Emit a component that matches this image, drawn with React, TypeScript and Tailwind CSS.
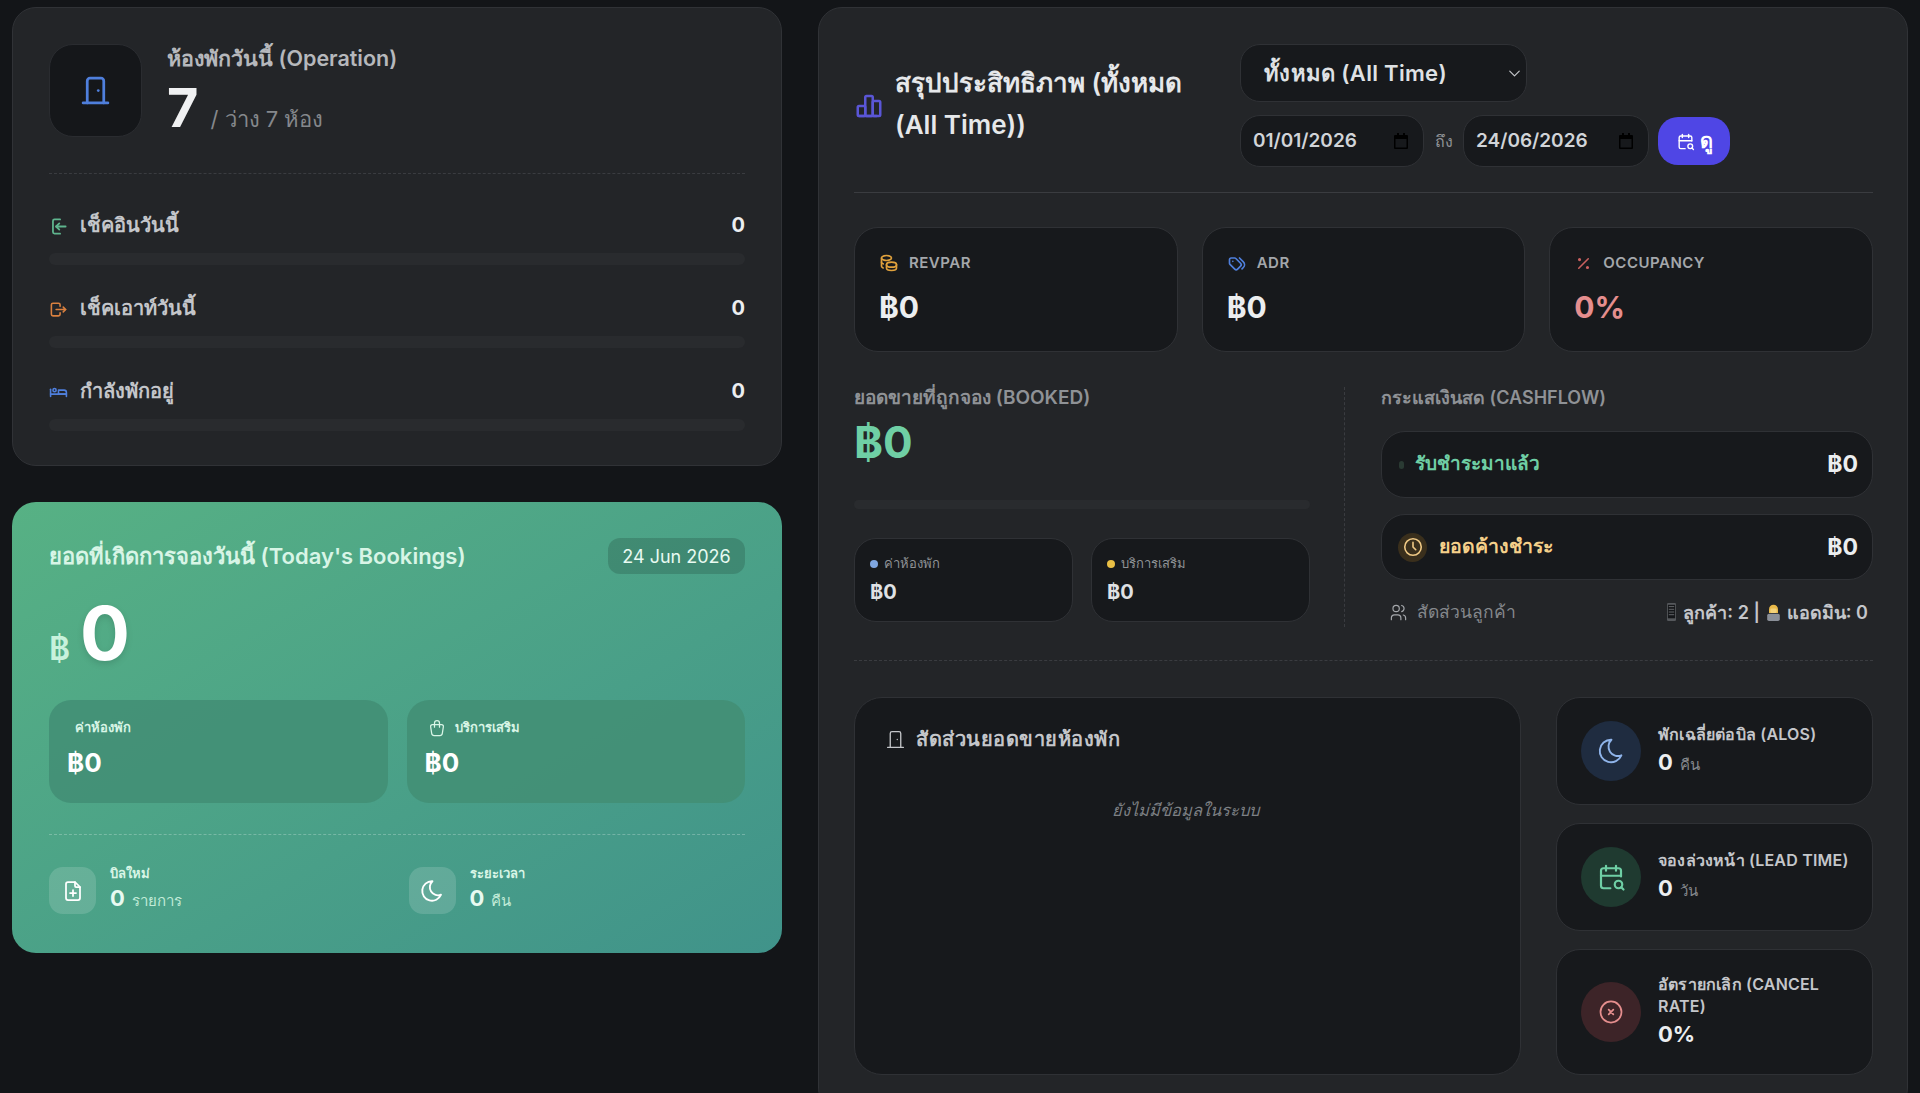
import React from 'react';
import {
  TbBed,
  TbCalendarSearch,
  TbChartBar,
  TbChevronDown,
  TbCircleX,
  TbClock,
  TbCoins,
  TbDoor,
  TbFilePlus,
  TbLogout,
  TbMoon,
  TbPercentage,
  TbShoppingBag,
  TbTags,
  TbUsers,
} from 'react-icons/tb';

const CheckInIcon = () => (
  <svg viewBox="0 0 24 24" fill="none" stroke="currentColor" strokeWidth="2.25" strokeLinecap="round" strokeLinejoin="round" className="w-[19px] h-[19px]">
    <path d="M14 21H7a2 2 0 0 1-2-2V5a2 2 0 0 1 2-2h7" />
    <path d="M13 8l-4 4 4 4" />
    <path d="M9 12h12" />
  </svg>
);

const CalendarGlyph = () => (
  <svg viewBox="0 0 16 16" className="w-[16px] h-[16px] text-black" fill="currentColor">
    <path d="M4 0h2v2h4V0h2v2h2a1 1 0 0 1 1 1v12a1 1 0 0 1-1 1H2a1 1 0 0 1-1-1V3a1 1 0 0 1 1-1h2V0zM2.5 6v8.5h11V6h-11z" />
  </svg>
);

const PhoneEmoji = () => (
  <svg viewBox="0 0 12 20" className="w-[11px] h-[18px]">
    <rect x="1" y="0" width="10" height="20" rx="1.5" fill="#55585c" />
    <rect x="2" y="2" width="8" height="15" fill="#15171a" />
    <path d="M3 4h6M3 7h6M3 10h6M3 13h6" stroke="#6a6d70" strokeWidth="1" />
  </svg>
);

const AdminEmoji = () => (
  <svg viewBox="0 0 16 20" className="w-[15px] h-[18px]">
    <rect x="1" y="12" width="14" height="8" rx="2" fill="#8a8f98" />
    <path d="M3 7a5 5 0 0 1 10 0v4H3z" fill="#e9b949" />
    <rect x="4.5" y="6" width="7" height="5" rx="1.5" fill="#f3d27a" />
  </svg>
);

const OpRow = ({ icon, label }: { icon: React.ReactNode; label: string }) => (
  <div className="mb-7 last:mb-0">
    <div className="flex items-center h-[30px]">
      <span className="w-[31px] flex items-center pt-[3px]">{icon}</span>
      <span className="text-[20px] font-semibold text-[#c4c6ca]">{label}</span>
      <span className="ml-auto text-[20px] font-bold text-[#eceef0]">0</span>
    </div>
    <div className="mt-[13px] h-[12px] rounded-full bg-[#292b2e]"></div>
  </div>
);

const TodayTile = ({ icon, label }: { icon?: React.ReactNode; label: string }) => (
  <div className="h-[103px] rounded-[22px] bg-[#428f75]/90 px-[18px] pt-[17px]">
    <div className="flex items-center h-[22px]">
      <span className={icon ? 'w-[30px] flex items-center pl-[2px]' : 'w-[8px]'}>{icon}</span>
      <span className="text-[13px] font-semibold text-[#d8f5e6]">{label}</span>
    </div>
    <div className="mt-[9px] text-[26px] leading-[30px] font-bold text-white">฿0</div>
  </div>
);

const TodayStat = ({ icon, label, unit }: { icon: React.ReactNode; label: string; unit: string }) => (
  <div className="flex items-center gap-[14px]">
    <div className="w-[47px] h-[47px] rounded-[14px] bg-white/15 flex items-center justify-center text-white">{icon}</div>
    <div>
      <div className="text-[13px] leading-[16px] font-semibold text-[#d8f5e6] -mt-[2px]">{label}</div>
      <div className="flex items-baseline gap-[7px] mt-[4px] leading-[26px]">
        <span className="text-[22px] font-bold text-[#e8faf1]">0</span>
        <span className="text-[15px] font-light text-[#c2ebd8]">{unit}</span>
      </div>
    </div>
  </div>
);

const Kpi = ({ icon, label, value, valueClass }: { icon: React.ReactNode; label: string; value: string; valueClass: string }) => (
  <div className="h-[125px] rounded-[24px] bg-[#17191c] border border-[#2f3135] px-[24px] pt-[24px]">
    <div className="flex items-center h-[22px] gap-[10px]">
      {icon}
      <span className="text-[15px] font-semibold tracking-[0.5px] text-[#a4a7ab]">{label}</span>
    </div>
    <div className={`mt-[13px] text-[30px] leading-[40px] font-bold ${valueClass}`}>{value}</div>
  </div>
);

const SplitTile = ({ dot, label }: { dot: string; label: string }) => (
  <div className="h-[84px] rounded-[22px] bg-[#17191c] border border-[#2f3135] px-[15px] pt-[15px]">
    <div className="flex items-center gap-[6px] h-[20px]">
      <span className={`w-[8px] h-[8px] rounded-full ${dot}`}></span>
      <span className="text-[13px] font-medium text-[#8f9296]">{label}</span>
    </div>
    <div className="mt-[5px] text-[20px] leading-[26px] font-bold text-[#dfe1e4]">฿0</div>
  </div>
);

const MetricCard = ({ icon, tone, label, value, unit, h }: { icon: React.ReactNode; tone: string; label: string; value: string; unit?: string; h: string }) => (
  <div className={`${h} rounded-[24px] bg-[#17191c] border border-[#2f3135] pl-[24px] pr-[10px] flex items-center gap-[17px]`}>
    <div className={`w-[60px] h-[60px] rounded-full flex items-center justify-center shrink-0 ${tone}`}>{icon}</div>
    <div className="pb-[3px]">
      <div className="text-[16px] leading-[22px] tracking-[0.2px] font-semibold text-[#c4c6ca]">{label}</div>
      <div className="flex items-baseline gap-[7px] mt-[3px]">
        <span className="text-[22px] leading-[28px] font-bold text-[#eceef0]">{value}</span>
        {unit && <span className="text-[15px] text-[#85888c]">{unit}</span>}
      </div>
    </div>
  </div>
);

const DateField = ({ value, w }: { value: string; w: string }) => (
  <div className={`${w} h-[52px] rounded-[20px] bg-[#17191c] border border-[#2f3135] pl-[12px] pr-[14px] flex items-center justify-between`}>
    <span className="text-[19px] font-semibold text-[#d1d4d8]">{value}</span>
    <CalendarGlyph />
  </div>
);

export default function App() {
  return (
    <div className="h-[1093px] overflow-hidden bg-[#131518] px-3 pt-[7px] flex gap-9 items-start font-['Inter','Noto_Sans',sans-serif]">
      {/* Left column */}
      <div className="w-[770px] shrink-0">
        <div className="rounded-[24px] bg-[#232528] border border-[#303236] px-9 pt-9 pb-[34px]">
          <div className="flex gap-[25px] pb-[36px] border-b border-dashed border-[#3a3c40]">
            <div className="w-[93px] h-[93px] rounded-[24px] bg-[#15171a] border border-[#2a2c30] flex items-center justify-center">
              <TbDoor className="w-[33px] h-[33px] text-[#4f7fdc]" strokeWidth={2} />
            </div>
            <div className="h-[93px]">
              <div className="text-[21.5px] leading-[26px] font-semibold text-[#b6b8bc] pt-[1px]">ห้องพักวันนี้ (Operation)</div>
              <div className="flex items-baseline gap-[12px] mt-[6px]">
                <span className="text-[54px] leading-[62px] font-bold text-[#f0f1f2]">7</span>
                <span className="text-[22px] text-[#85888c]">/ ว่าง 7 ห้อง</span>
              </div>
            </div>
          </div>
          <div className="mt-[36px]">
            <OpRow icon={<span className="text-[#5fb58e]"><CheckInIcon /></span>} label="เช็คอินวันนี้" />
            <OpRow icon={<TbLogout className="w-[19px] h-[19px] text-[#d9803f]" />} label="เช็คเอาท์วันนี้" />
            <OpRow icon={<TbBed className="w-[19px] h-[19px] text-[#4f7fdc]" />} label="กำลังพักอยู่" />
          </div>
        </div>

        <div className="mt-[36px] rounded-[24px] bg-gradient-to-br from-[#57b184] to-[#40938a] px-[37px] pt-9 pb-[39px]">
          <div className="flex items-center justify-between">
            <span className="text-[22px] font-semibold text-[#d8f5e6]">ยอดที่เกิดการจองวันนี้ (Today's Bookings)</span>
            <span className="h-[36px] w-[137px] rounded-[12px] bg-black/15 flex items-center justify-center text-[18px] text-[#e8faf1]">24 Jun 2026</span>
          </div>
          <div className="h-[126px] flex items-baseline gap-[10px] pt-[17px]">
            <span className="text-[32px] leading-[84px] font-semibold text-[#c8f2dc]">฿</span>
            <span className="text-[74px] leading-[84px] font-bold text-white drop-shadow-md">0</span>
          </div>
          <div className="grid grid-cols-2 gap-[19px]">
            <TodayTile label="ค่าห้องพัก" />
            <TodayTile icon={<TbShoppingBag className="w-[20px] h-[20px] text-[#d8f5e6]" strokeWidth={1.5} />} label="บริการเสริม" />
          </div>
          <div className="mt-[31px] pt-[32px] border-t border-dashed border-white/25 grid grid-cols-2 gap-[23px]">
            <TodayStat icon={<TbFilePlus className="w-[24px] h-[24px]" strokeWidth={1.75} />} label="บิลใหม่" unit="รายการ" />
            <TodayStat icon={<TbMoon className="w-[26px] h-[26px]" strokeWidth={1.75} />} label="ระยะเวลา" unit="คืน" />
          </div>
        </div>
      </div>

      {/* Right column */}
      <div className="flex-1 rounded-[24px] bg-[#232528] border border-[#303236] pl-[35px] pr-[34px] pt-9 pb-9">
        <div className="flex items-center pb-[25px] border-b border-[#3a3c40]">
          <TbChartBar className="w-[30px] h-[30px] text-[#5a56d6] shrink-0" />
          <div className="w-[316px] ml-[11px] mr-[29px] pb-[4px] text-[26px] leading-[42px] font-semibold text-[#e6e8ea]">สรุปประสิทธิภาพ (ทั้งหมด (All Time))</div>
          <div>
            <div className="w-[287px] h-[58px] rounded-[20px] bg-[#17191c] border border-[#2f3135] pl-[23px] pr-[2px] flex items-center justify-between">
              <span className="text-[22px] tracking-[0.3px] font-semibold text-[#dfe1e4]">ทั้งหมด (All Time)</span>
              <TbChevronDown className="w-[19px] h-[19px] text-[#c4c6ca]" strokeWidth={1.5} />
            </div>
            <div className="flex items-center mt-[13px]">
              <DateField value="01/01/2026" w="w-[184px]" />
              <span className="w-[39px] text-center text-[16px] font-medium text-[#8f9296]">ถึง</span>
              <DateField value="24/06/2026" w="w-[186px]" />
              <button className="ml-[9px] w-[72px] h-[48px] rounded-[20px] bg-[#4f46e5] flex items-center justify-center gap-[5px] text-white text-[20px] font-semibold">
                <TbCalendarSearch className="w-[19px] h-[19px]" strokeWidth={1.75} />
                ดู
              </button>
            </div>
          </div>
        </div>

        <div className="mt-[34px] grid grid-cols-3 gap-[24px]">
          <Kpi icon={<TbCoins className="w-[20px] h-[20px] text-[#e0a13c]" />} label="REVPAR" value="฿0" valueClass="text-[#eceef0]" />
          <Kpi icon={<TbTags className="w-[20px] h-[20px] text-[#4f7fdc]" />} label="ADR" value="฿0" valueClass="text-[#eceef0]" />
          <Kpi icon={<TbPercentage className="w-[19px] h-[19px] text-[#c9605f]" />} label="OCCUPANCY" value="0%" valueClass="text-[#e58e8e]" />
        </div>

        <div className="mt-[35px] flex">
          <div className="w-[456px] pb-[5px]">
            <div className="text-[19px] leading-[22px] font-semibold text-[#8f9296]">ยอดขายที่ถูกจอง (BOOKED)</div>
            <div className="mt-[8px] text-[44px] leading-[50px] font-bold text-[#6fcfa5]">฿0</div>
            <div className="mt-[33px] h-[9px] rounded-full bg-[#292b2e]"></div>
            <div className="mt-[29px] grid grid-cols-2 gap-[18px]">
              <SplitTile dot="bg-[#7fa6e0]" label="ค่าห้องพัก" />
              <SplitTile dot="bg-[#e9bf45]" label="บริการเสริม" />
            </div>
          </div>
          <div className="ml-[34px] mr-[36px] border-l border-dashed border-[#3a3c40]"></div>
          <div className="flex-1">
            <div className="text-[18px] leading-[22px] font-semibold text-[#8f9296]">กระแสเงินสด (CASHFLOW)</div>
            <div className="mt-[22px] h-[67px] rounded-[24px] bg-[#17191c] border border-[#2f3135] pl-[17px] pr-[14px] flex items-center">
              <span className="w-[5px] h-[8px] rounded-full bg-[#2a3a33] mr-[11px]"></span>
              <span className="text-[19px] font-semibold text-[#6fcfa5]">รับชำระมาแล้ว</span>
              <span className="ml-auto text-[23px] font-bold text-[#eceef0]">฿0</span>
            </div>
            <div className="mt-[16px] h-[66px] rounded-[24px] bg-[#17191c] border border-[#2f3135] pl-[16px] pr-[14px] flex items-center">
              <span className="w-[29px] h-[29px] rounded-full bg-[#3a2f1c] flex items-center justify-center mr-[12px]">
                <TbClock className="w-[22px] h-[22px] text-[#f0c985]" strokeWidth={1.75} />
              </span>
              <span className="text-[19.5px] font-semibold text-[#f5d08a]">ยอดค้างชำระ</span>
              <span className="ml-auto text-[23px] font-bold text-[#eceef0]">฿0</span>
            </div>
            <div className="mt-[18px] pl-[8px] pr-[5px] flex items-center h-[28px]">
              <TbUsers className="w-[19px] h-[19px] text-[#a4a7ab]" strokeWidth={1.5} />
              <span className="ml-[9px] text-[17.5px] text-[#85888c]">สัดส่วนลูกค้า</span>
              <span className="ml-auto flex items-center gap-[6px] text-[18px] font-semibold text-[#c4c6ca]">
                <PhoneEmoji />
                ลูกค้า: 2 |
                <AdminEmoji />
                แอดมิน: 0
              </span>
            </div>
          </div>
        </div>

        <div className="mt-[33px] border-t border-dashed border-[#3a3c40]"></div>

        <div className="mt-[36px] flex gap-[35px] items-start">
          <div className="w-[667px] h-[378px] rounded-[28px] bg-[#17191c] border border-[#2f3135] pl-[30px] pr-[34px] pt-[26px]">
            <div className="flex items-center gap-[10px]">
              <TbDoor className="w-[21px] h-[21px] text-[#c4c6ca]" strokeWidth={1.5} />
              <span className="text-[20px] font-semibold tracking-[0.5px] text-[#c4c6ca]">สัดส่วนยอดขายห้องพัก</span>
            </div>
            <div className="mt-[44px] text-center text-[16.5px] italic text-[#7d8084]">ยังไม่มีข้อมูลในระบบ</div>
          </div>
          <div className="flex-1 flex flex-col gap-[18px]">
            <MetricCard h="h-[108px]" tone="bg-[#1f2c40]" icon={<TbMoon className="w-[30px] h-[30px] text-[#8fb4ea]" strokeWidth={1.5} />} label="พักเฉลี่ยต่อบิล (ALOS)" value="0" unit="คืน" />
            <MetricCard h="h-[108px]" tone="bg-[#1f3a30]" icon={<TbCalendarSearch className="w-[30px] h-[30px] text-[#6fcfa5]" strokeWidth={1.75} />} label="จองล่วงหน้า (LEAD TIME)" value="0" unit="วัน" />
            <MetricCard h="h-[126px]" tone="bg-[#3d2428]" icon={<TbCircleX className="w-[28px] h-[28px] text-[#e58e8e]" strokeWidth={1.5} />} label="อัตรายกเลิก (CANCEL RATE)" value="0%" />
          </div>
        </div>
      </div>
    </div>
  );
}
